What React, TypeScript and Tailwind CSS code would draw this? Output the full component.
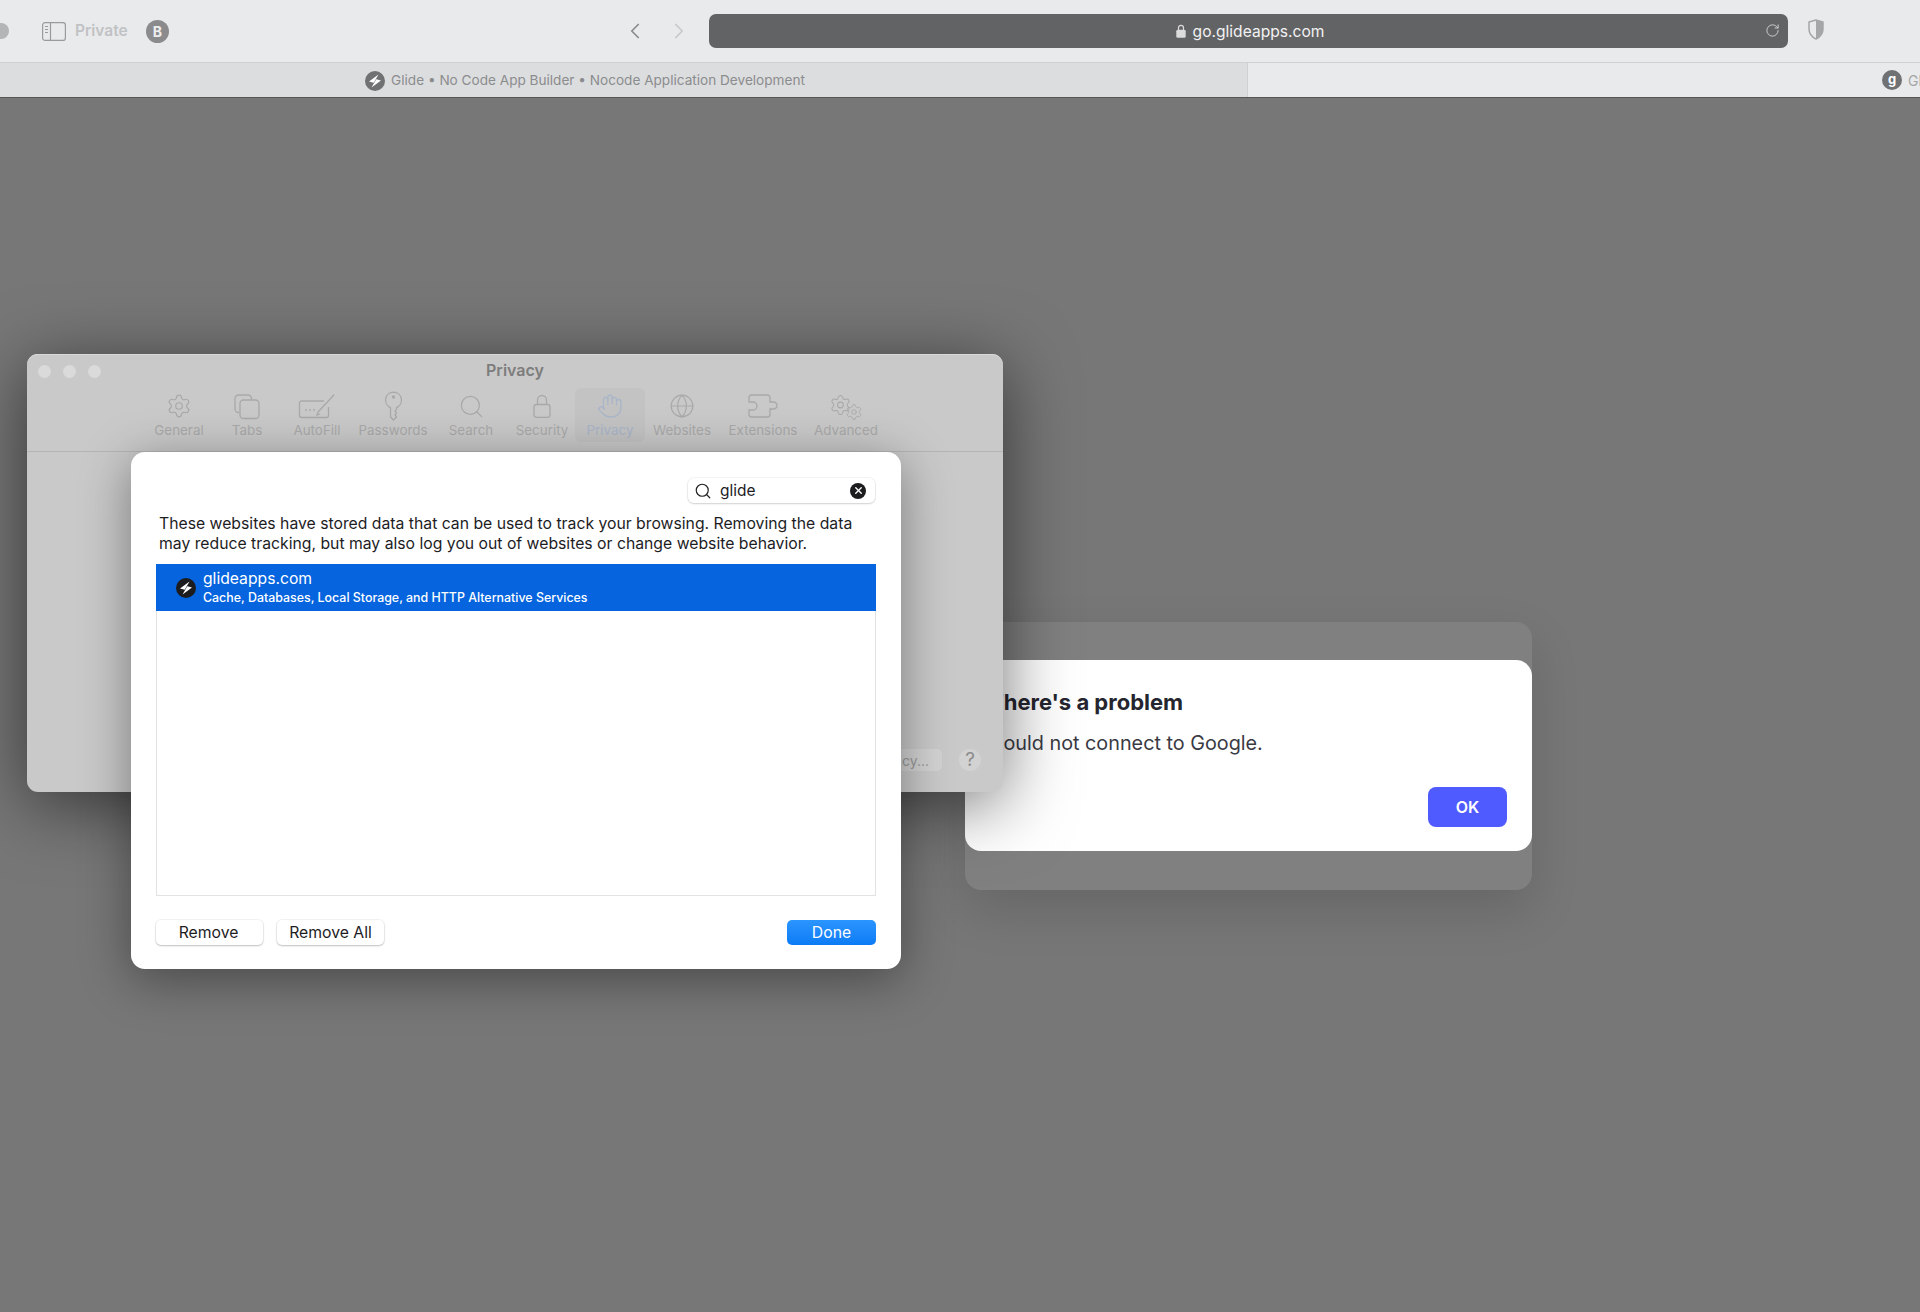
import { ChevronLeft, ChevronRight, Globe, Hand, RotateCw, Search, Settings, X } from "lucide-react";
import type { ReactNode } from "react";

// Glide のロゴ（黒丸に白い稲妻）
function GlideLogo({ className, fill = "#1c1c1e" }: { className: string; fill?: string }) {
  return (
    <svg viewBox="0 0 20 20" className={className}>
      <circle cx="10" cy="10" r="10" fill={fill} />
      <path d="M13.500 3.500 4 10.500l4.700 1.200zM6.500 16.500l9.500-7-4.700-1.200z" fill="#fff" />
    </svg>
  );
}

function TabsIcon() {
  return (
    <svg width="28" height="27" viewBox="0 0 28 27" fill="none" stroke="currentColor" strokeWidth="1.3">
      <path d="M6 19.500h-.5A3.500 3.500 0 0 1 2 16V5.500A3.500 3.500 0 0 1 5.500 2H15a3.500 3.500 0 0 1 3.500 3.500V7" />
      <rect x="7" y="7" width="19" height="18.500" rx="3.500" />
    </svg>
  );
}

function AutoFillIcon() {
  return (
    <svg width="38" height="26" viewBox="0 0 38 26" fill="none" stroke="currentColor" strokeWidth="1.3">
      <path d="M26 8H3.500A2 2 0 0 0 1.500 10v12.500a2 2 0 0 0 2 2h25a2 2 0 0 0 2-2V14" />
      <path d="M20 19 34.500 3.500M34.500 3.500l1.500-2M20 19l-1 3 3-1" />
      <circle cx="8" cy="17" r=".9" fill="currentColor" stroke="none" />
      <circle cx="12" cy="17" r=".9" fill="currentColor" stroke="none" />
      <circle cx="16" cy="17" r=".9" fill="currentColor" stroke="none" />
    </svg>
  );
}

function KeyIcon() {
  return (
    <svg width="19" height="30" viewBox="0 0 19 30" fill="none" stroke="currentColor" strokeWidth="1.3">
      <path d="M9.500 1.200a8 8 0 0 0-3 15.400V26l3 3 3-3-1.500-2 1.500-2-1.500-2 1.500-1.500v-1.900a8 8 0 0 0-3-15.400z" />
      <circle cx="9.500" cy="6" r="1.700" fill="currentColor" stroke="none" />
    </svg>
  );
}

function LockIcon({ className }: { className: string }) {
  return (
    <svg viewBox="0 0 18 24" fill="none" stroke="currentColor" strokeWidth="1.3" className={className}>
      <path d="M4.500 10.500V6a4.500 4.500 0 0 1 9 0v4.500" />
      <rect x="1" y="10.500" width="16" height="12.800" rx="2.500" />
    </svg>
  );
}

function ExtensionIcon() {
  return (
    <svg width="30" height="24" viewBox="0 0 30 24" fill="none" stroke="currentColor" strokeWidth="1.3">
      <path d="M3.500 1h16A2.500 2.500 0 0 1 22 3.500V8h3.500a3.500 3.500 0 0 1 0 7H22v5.500a2.500 2.500 0 0 1-2.500 2.500h-16A2.500 2.500 0 0 1 1 20.500V16h4a4 4 0 0 0 0-8H1V3.500A2.500 2.500 0 0 1 3.500 1z" />
    </svg>
  );
}

function AdvancedIcon() {
  return (
    <div className="flex w-[34px] h-[27px] items-start">
      <Settings size={24} strokeWidth={1.1} />
      <Settings size={18} strokeWidth={1.2} className="-ml-[7px] mt-[10px] shrink-0" />
    </div>
  );
}

type PrefTab = { label: string; width: string; icon: ReactNode; active?: boolean };

const PREF_TABS: PrefTab[] = [
  { label: "General", width: "w-[68px]", icon: <Settings size={26} strokeWidth={1.1} /> },
  { label: "Tabs", width: "w-[68px]", icon: <TabsIcon /> },
  { label: "AutoFill", width: "w-[72px]", icon: <AutoFillIcon /> },
  { label: "Passwords", width: "w-[80px]", icon: <KeyIcon /> },
  { label: "Search", width: "w-[76px]", icon: <Search size={27} strokeWidth={1.1} /> },
  { label: "Security", width: "w-[66px]", icon: <LockIcon className="w-[18px] h-[24px]" /> },
  { label: "Privacy", width: "w-[70px]", icon: <Hand size={26} strokeWidth={1.2} />, active: true },
  { label: "Websites", width: "w-[74px]", icon: <Globe size={26} strokeWidth={1.1} /> },
  { label: "Extensions", width: "w-[88px]", icon: <ExtensionIcon /> },
  { label: "Advanced", width: "w-[78px]", icon: <AdvancedIcon /> },
];

function BrowserChrome() {
  return (
    <div className="shrink-0 bg-[#e9eaec]">
      {/* ツールバー */}
      <div className="h-[63px] flex items-center border-b border-[#d0d0d2]">
        <div className="w-[16px] h-[16px] -ml-[7px] rounded-full bg-[#b4b5b6]" />
        <svg width="24" height="19" viewBox="0 0 24 19" fill="none" stroke="#9a9b9d" strokeWidth="1.200" className="ml-[33px]">
          <rect x=".6" y=".6" width="22.800" height="17.800" rx="2.500" />
          <path d="M8.500 .6v17.800M3 4.500h3M3 7.500h3M3 10.500h3" />
        </svg>
        <span className="ml-[9px] w-[55px] text-[15.500px] font-semibold text-[#c1c2c4] whitespace-nowrap">Private</span>
        <div className="ml-[16px] w-[23px] h-[23px] rounded-full bg-[#8b8b8d] flex items-center justify-center text-[14px] font-bold text-[#eeeeee]">B</div>
        <ChevronLeft size={26} strokeWidth={1.6} className="ml-[453px] text-[#8a8b8d]" />
        <ChevronRight size={26} strokeWidth={1.6} className="ml-[18px] text-[#c8c9cb]" />
        <div className="ml-[17px] w-[1079px] h-[34px] mt-[-1px] rounded-[7px] bg-[#626365] flex items-center relative">
          <div className="flex-1 flex items-center justify-center gap-[7px] pt-[2px] pl-[3px] text-[15.600px] text-[#f2f2f2]">
            <svg width="10" height="14" viewBox="0 0 10 14" className="mt-[-1px]">
              <path d="M2.500 6V3.800a2.500 2.500 0 0 1 5 0V6" fill="none" stroke="#dcdcdc" strokeWidth="1.200" />
              <rect x=".3" y="5.800" width="9.400" height="8" rx="1.500" fill="#dcdcdc" />
            </svg>
            go.glideapps.com
          </div>
          <RotateCw size={15} strokeWidth={1.500} className="absolute right-[8px] top-[9px] text-[#d2d2d2]" />
        </div>
        <svg width="18" height="21" viewBox="0 0 18 21" className="ml-[19px] mt-[-3px]">
          <path d="M9 1 2 3v7c0 5 3 8 7 10 4-2 7-5 7-10V3z" fill="#e9eaec" stroke="#a5a6a8" strokeWidth="1.500" />
          <path d="M9 1v19c4-2 7-5 7-10V3z" fill="#a5a6a8" />
        </svg>
      </div>

      {/* タブバー */}
      <div className="h-[34px] flex items-center overflow-hidden">
        <div className="w-[1248px] h-full shrink-0 bg-[#dcddde] border-r border-[#cfd0d1] flex items-center justify-center gap-[6px] pt-[1px] pr-[77px] text-[13.600px] text-[#8b8c8e]">
          <GlideLogo className="w-[20px] h-[20px]" fill="#707173" />
          <span>Glide • No Code App Builder • Nocode Application Development</span>
        </div>
        <div className="ml-[634px] w-[20px] h-[20px] rounded-full bg-[#707173] flex items-center justify-center text-[13px] font-bold text-white shrink-0">g</div>
        <span className="ml-[6px] text-[14px] text-[#a5a6a8] shrink-0">Glide</span>
      </div>
    </div>
  );
}

function PrefsWindow() {
  return (
    <div className="absolute left-[27px] top-[256px] w-[976px] h-[438px] rounded-[11px] bg-[#c9c9c9] shadow-[0_12px_70px_rgba(0,0,0,0.55),inset_0_1px_0_#d8d8d8] flex flex-col">
      <div className="h-[34px] flex items-center">
        <div className="flex-1 flex items-center gap-[12px] pl-[11px]">
          <div className="w-[13px] h-[13px] rounded-full bg-[#dadada]" />
          <div className="w-[13px] h-[13px] rounded-full bg-[#dadada]" />
          <div className="w-[13px] h-[13px] rounded-full bg-[#dadada]" />
        </div>
        <span className="mt-[-2px] text-[16px] font-semibold text-[#7d7d7d]">Privacy</span>
        <div className="flex-1 pr-[11px]" />
      </div>

      <div className="h-[64px] pl-[118px] flex items-start border-b border-[#b5b5b5] text-[#a9a9a9]">
        {PREF_TABS.map((tab) => (
          <div key={tab.label} className={`${tab.width} h-[54px] flex flex-col items-center`}>
            <div className={`w-full h-full flex flex-col items-center rounded-[6px] ${tab.active ? "bg-[#c3c3c3] text-[#a9b5c9]" : ""}`}>
              <div className="h-[34px] pt-[2px] flex items-center justify-center">{tab.icon}</div>
              <span className="text-[13.400px] leading-[16px] whitespace-nowrap">{tab.label}</span>
            </div>
          </div>
        ))}
      </div>

      <div className="flex-1 flex items-end justify-end gap-[17px] pr-[22px] pb-[21px]">
        <div className="h-[22px] px-[13px] rounded-[5px] bg-[#d2d2d2] flex items-center text-[14px] text-[#9a9a9a]">About Safari &amp; Privacy...</div>
        <div className="w-[22px] h-[22px] rounded-full bg-[#d2d2d2] flex items-center justify-center text-[19px] text-[#8d8d8d]">?</div>
      </div>
    </div>
  );
}

function WebsiteDataSheet() {
  return (
    <div className="absolute left-[131px] top-[354px] w-[770px] h-[517px] rounded-[14px] bg-white shadow-[0_10px_50px_rgba(0,0,0,0.4)] px-[25px] pt-[26px] flex flex-col text-[#1d1d1f]">
      <div className="self-end -mr-px w-[187px] h-[25px] rounded-[6px] bg-white shadow-[0_0_0_1px_rgba(0,0,0,0.04),0_1px_2px_rgba(0,0,0,0.15)] flex items-center pl-[6px] pr-[9px] mr-[1px]">
        <Search size={18} strokeWidth={1.6} className="text-[#222] shrink-0" />
        <span className="ml-[8px] flex-1 text-[15.500px]">glide</span>
        <div className="w-[16px] h-[16px] rounded-full bg-[#1c1c1e] flex items-center justify-center">
          <X size={11} strokeWidth={3} className="text-white" />
        </div>
      </div>

      <p className="mt-[11px] ml-[3px] text-[15.750px] leading-[20px] whitespace-nowrap">
        These websites have stored data that can be used to track your browsing. Removing the data
        <br />
        may reduce tracking, but may also log you out of websites or change website behavior.
      </p>

      <div className="mt-[10px] h-[332px] border border-[#e2e2e2] border-t-0 flex flex-col">
        <div className="-mx-px h-[47px] bg-[#0564de] flex items-center pl-[20px] text-white">
          <GlideLogo className="w-[20px] h-[20px] shrink-0" />
          <div className="ml-[7px]">
            <div className="text-[15.700px] leading-[20px]">glideapps.com</div>
            <div className="text-[12.400px] leading-[18px] font-medium">Cache, Databases, Local Storage, and HTTP Alternative Services</div>
          </div>
        </div>
      </div>

      <div className="mt-[24px] flex items-center gap-[14px] text-[15.750px]">
        <button className="w-[107px] h-[25px] pr-[2px] rounded-[5px] bg-white shadow-[0_0_0_1px_rgba(0,0,0,0.04),0_1px_2px_rgba(0,0,0,0.22)]">Remove</button>
        <button className="w-[107px] h-[25px] rounded-[5px] bg-white shadow-[0_0_0_1px_rgba(0,0,0,0.04),0_1px_2px_rgba(0,0,0,0.22)]">Remove All</button>
        <button className="ml-auto w-[89px] h-[25px] rounded-[5px] bg-gradient-to-b from-[#2b95ff] to-[#0a7bf5] text-white">Done</button>
      </div>
    </div>
  );
}

function ProblemDialog() {
  return (
    <div className="absolute left-[965px] top-[524px] w-[567px] h-[268px] rounded-[16px] bg-[#808080] shadow-[0_20px_50px_rgba(0,0,0,0.14)] pt-[38px]">
      <div className="h-[191px] rounded-[16px] bg-white pl-[24px] pr-[25px] pt-[28px] flex flex-col">
        <h2 className="text-[22px] leading-[28px] font-bold text-[#25252f]">There's a problem</h2>
        <p className="mt-[13px] text-[19.800px] leading-[28px] text-[#3a3a44]">Could not connect to Google.</p>
        <button className="self-end mt-[30px] w-[79px] h-[40px] rounded-[8px] bg-[#4f5bff] text-white text-[16px] font-semibold">OK</button>
      </div>
    </div>
  );
}

export default function App() {
  return (
    <div className="w-[1920px] h-[1312px] overflow-hidden flex flex-col font-['Inter',sans-serif]">
      <BrowserChrome />
      <div className="relative flex-1 bg-[#777777] border-t border-[#565656]">
        <ProblemDialog />
        <PrefsWindow />
        <WebsiteDataSheet />
      </div>
    </div>
  );
}
